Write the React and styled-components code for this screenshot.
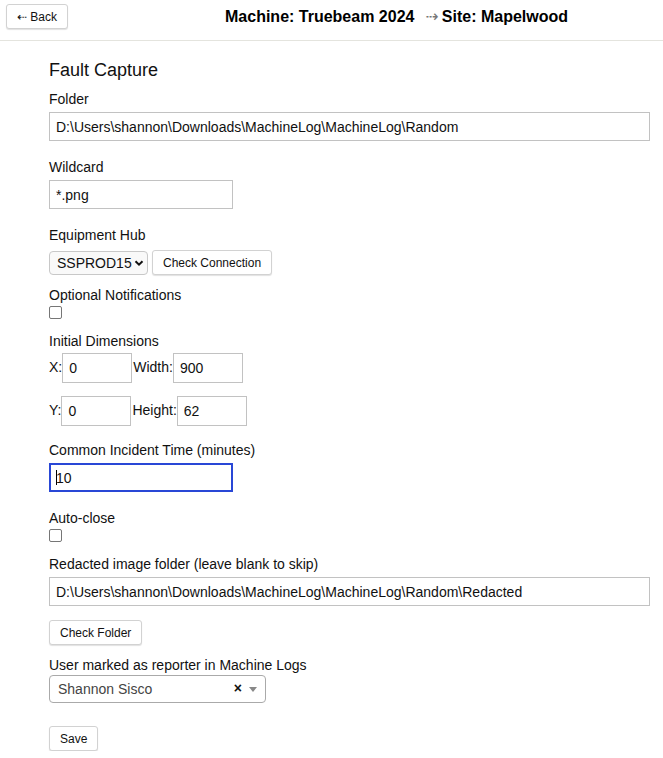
import React from "react";
import styled, { createGlobalStyle } from "styled-components";

const GlobalStyle = createGlobalStyle`
  body {
    margin: 0;
    background: #ffffff;
    font-family: "Liberation Sans", Arial, sans-serif;
    color: #111;
  }
`;

const Header = styled.header`
  display: flex;
  align-items: flex-start;
  height: 36px;
  padding: 4px 6px 0;
  border-bottom: 1px solid #e4e4de;
`;

const Title = styled.h1`
  margin: 0 0 0 157px;
  font-size: 16px;
  line-height: 25px;
  font-weight: bold;
  color: #000;
  white-space: nowrap;
`;

const Arrow = styled.span`
  font-family: "DejaVu Sans", sans-serif;
  font-weight: normal;
  color: #777;
  font-size: 16px;
  margin: 0 3px 0 11px;
`;

const Button = styled.button`
  font-family: "Liberation Sans", Arial, sans-serif;
  font-size: 12px;
  color: #111;
  background: #fff;
  border: 1px solid #d2d2d2;
  border-radius: 3px;
  box-shadow: 0 1px 1px rgba(0, 0, 0, 0.12);
  height: 25px;
  padding: 0 10px;
  cursor: pointer;
`;

const Main = styled.main`
  padding: 19px 13px 0 49px;
`;

const Heading = styled.h2`
  margin: 0 0 11px;
  font-size: 18px;
  font-weight: normal;
  line-height: 20px;
`;

const Field = styled.div`
  margin-bottom: ${(p) => p.$gap ?? 18}px;
`;

const Label = styled.label`
  display: block;
  font-size: 14px;
  line-height: 16px;
  margin-bottom: ${(p) => p.$gap ?? 5}px;
`;

const TextInput = styled.input`
  box-sizing: border-box;
  display: block;
  width: ${(p) => p.$width || "100%"};
  height: 29px;
  font-family: "Liberation Sans", Arial, sans-serif;
  font-size: 14px;
  color: #111;
  border: ${(p) => (p.$focused ? "2px solid #2947d6" : "1px solid #c2c2c2")};
  padding: 0 6px 0 ${(p) => (p.$focused ? 5 : 6)}px;
  outline: none;
  background: #fff;
`;

const CaretWrap = styled.div`
  position: relative;
  width: 184px;

  &::after {
    content: "";
    position: absolute;
    left: 7px;
    top: 7px;
    width: 1px;
    height: 15px;
    background: #000;
  }
`;

const Row = styled.div`
  display: flex;
  align-items: center;
  gap: ${(p) => p.$gap ?? 0}px;
  margin-bottom: ${(p) => p.$mb ?? 0}px;
`;

const InlineLabel = styled.span`
  font-size: 14px;
  line-height: 16px;
  margin-top: -2px;
`;

const DimInput = styled(TextInput)`
  width: 70px;
  height: 30px;
  margin-right: 1px;
`;

const SelectBox = styled.div`
  box-sizing: border-box;
  display: flex;
  align-items: center;
  justify-content: space-between;
  width: 99px;
  height: 24px;
  padding: 0 3px 0 7px;
  font-size: 14px;
  border: 1px solid #c8c8c8;
  border-radius: 4px;
  background: #f9f9f9;
`;

const Checkbox = styled.span`
  display: block;
  box-sizing: border-box;
  width: 13px;
  height: 13px;
  border: 1px solid #767676;
  border-radius: 2px;
  background: #fff;
`;

const UserSelect = styled.div`
  box-sizing: border-box;
  display: flex;
  align-items: center;
  width: 217px;
  height: 28px;
  padding: 0 8px;
  border: 1px solid #aaa;
  border-radius: 4px;
  background: #fff;
  font-size: 14px;
  color: #444;
`;

const UserName = styled.span`
  flex: 1;
`;

const Clear = styled.span`
  font-size: 14px;
  font-weight: bold;
  color: #111;
  margin: -3px 7px 0 0;
`;

const Caret = styled.span`
  width: 0;
  height: 0;
  border-left: 4px solid transparent;
  border-right: 4px solid transparent;
  border-top: 5px solid #888;
  margin-top: 1px;
`;

function Chevron() {
  return (
    <svg width="10" height="10" viewBox="0 0 10 10">
      <path d="M1.5 3.2 L5 6.7 L8.5 3.2" fill="none" stroke="#111" strokeWidth="2" />
    </svg>
  );
}

export default function App() {
  return (
    <>
      <GlobalStyle />
      <Header>
        <Button>⇠ Back</Button>
        <Title>
          Machine: Truebeam 2024<Arrow>⇢</Arrow>Site: Mapelwood
        </Title>
      </Header>
      <Main>
        <Heading>Fault Capture</Heading>

        <Field>
          <Label>Folder</Label>
          <TextInput defaultValue="D:\Users\shannon\Downloads\MachineLog\MachineLog\Random" />
        </Field>

        <Field>
          <Label>Wildcard</Label>
          <TextInput $width="184px" defaultValue="*.png" />
        </Field>

        <Field $gap={12}>
          <Label $gap={7}>Equipment Hub</Label>
          <Row $gap={4}>
            <SelectBox>
              <span>SSPROD15</span>
              <Chevron />
            </SelectBox>
            <Button>Check Connection</Button>
          </Row>
        </Field>

        <Field $gap={14}>
          <Label $gap={3}>Optional Notifications</Label>
          <Checkbox />
        </Field>

        <Field $gap={16}>
          <Label $gap={4}>Initial Dimensions</Label>
          <Row $mb={13}>
            <InlineLabel>X:</InlineLabel>
            <DimInput defaultValue="0" />
            <InlineLabel>Width:</InlineLabel>
            <DimInput defaultValue="900" />
          </Row>
          <Row>
            <InlineLabel>Y:</InlineLabel>
            <DimInput defaultValue="0" />
            <InlineLabel>Height:</InlineLabel>
            <DimInput defaultValue="62" />
          </Row>
        </Field>

        <Field>
          <Label>Common Incident Time (minutes)</Label>
          <CaretWrap>
            <TextInput $focused $width="184px" defaultValue="10" />
          </CaretWrap>
        </Field>

        <Field $gap={14}>
          <Label $gap={3}>Auto-close</Label>
          <Checkbox />
        </Field>

        <Field $gap={14}>
          <Label>Redacted image folder (leave blank to skip)</Label>
          <TextInput defaultValue="D:\Users\shannon\Downloads\MachineLog\MachineLog\Random\Redacted" />
        </Field>

        <Field $gap={12}>
          <Button>Check Folder</Button>
        </Field>

        <Field $gap={23}>
          <Label $gap={2}>User marked as reporter in Machine Logs</Label>
          <UserSelect>
            <UserName>Shannon Sisco</UserName>
            <Clear>×</Clear>
            <Caret />
          </UserSelect>
        </Field>

        <Button>Save</Button>
      </Main>
    </>
  );
}
